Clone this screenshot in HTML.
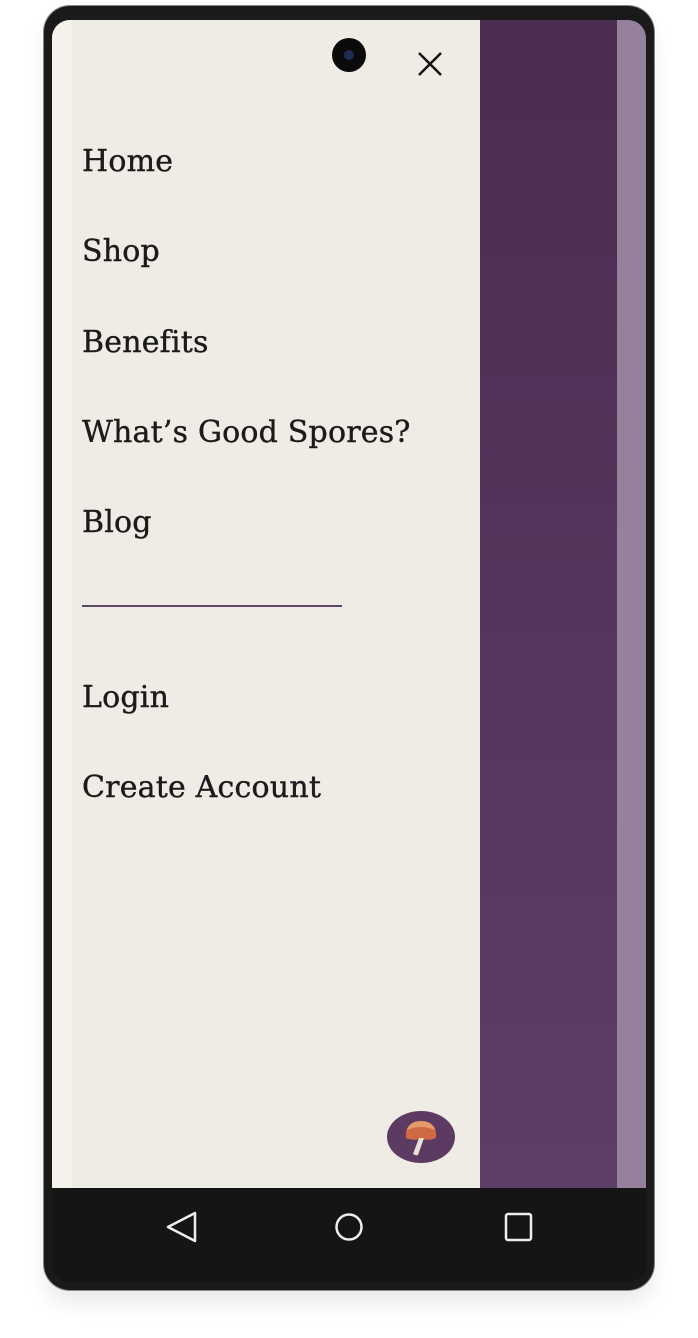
<!DOCTYPE html>
<html><head><meta charset="utf-8"><style>
body{margin:0;width:698px;height:1338px;background:#fff;position:relative;overflow:hidden;font-family:"DejaVu Serif",serif}
.abs{position:absolute}
.frame{left:44px;top:6px;width:610px;height:1284px;background:#1a1a1a;border-radius:26px;box-shadow:0 0 0 1px #888,0 14px 20px rgba(0,0,0,0.08)}
.screen{left:52px;top:20px;width:594px;height:1262px;border-radius:18px;overflow:hidden;background:#141414}
.cream{left:0;top:0;width:428px;height:1168px;background:#efebe5}
.edge{left:0;top:0;width:20px;height:1168px;background:#f5f2ee}
.purple{left:428px;top:0;width:137px;height:1168px;background:linear-gradient(#4b2d51,#5d3e66)}
.lp{left:565px;top:0;width:29px;height:1168px;background:#95819c}
.nav{left:0;top:1168px;width:594px;height:94px;background:#151515}
.t{left:30px;font-size:30px;color:#1b1b1b;line-height:40px;white-space:nowrap;letter-spacing:0.2px;-webkit-text-stroke:0.4px #1b1b1b}
</style></head><body>
<div class="abs frame"></div>
<div class="abs screen">
<div class="abs cream"></div><div class="abs edge"></div>
<div class="abs purple"></div><div class="abs lp"></div>
<div class="abs" style="left:280px;top:18px;width:34px;height:34px;border-radius:50%;background:#0b0b0b"></div>
<div class="abs" style="left:292px;top:30px;width:10px;height:10px;border-radius:50%;background:#1f2a55"></div>
<svg class="abs" style="left:364px;top:30px" width="28" height="28"><path d="M3 3L25 25M25 3L3 25" stroke="#111" stroke-width="2.5"/></svg>
<div class="abs t" style="top:122px">Home</div>
<div class="abs t" style="top:212px">Shop</div>
<div class="abs t" style="top:303px">Benefits</div>
<div class="abs t" style="top:393px">What’s Good Spores?</div>
<div class="abs t" style="top:483px">Blog</div>
<div class="abs" style="left:30px;top:585px;width:260px;height:2px;background:#5b4862"></div>
<div class="abs t" style="top:658px">Login</div>
<div class="abs t" style="top:748px">Create Account</div>
<svg class="abs" style="left:334px;top:1090px" width="70" height="54"><ellipse cx="35" cy="27" rx="34" ry="26" fill="#5c3a62"/><path d="M20 28Q18 12 35 11Q52 12 50 28Q43 31 35 29Q27 31 20 28Z" fill="#cf6a45"/><path d="M21 20Q24 11 35 11Q46 11 49 20Q42 17 35 17Q28 17 21 20Z" fill="#e59a6a"/><path d="M33 28L27 44Q30 46 32 45L38 28Z" fill="#e9e1d3"/></svg>
<div class="abs nav"></div>
<svg class="abs" style="left:58px;top:1185px" width="520" height="50"><path d="M85 8L58 22L85 36Z" fill="none" stroke="#eee" stroke-width="2.5" stroke-linejoin="round"/><circle cx="239" cy="22" r="12.5" fill="none" stroke="#eee" stroke-width="2.5"/><rect x="396" y="9" width="25" height="26" rx="2" fill="none" stroke="#eee" stroke-width="2.5"/></svg>
</div>
</body></html>
